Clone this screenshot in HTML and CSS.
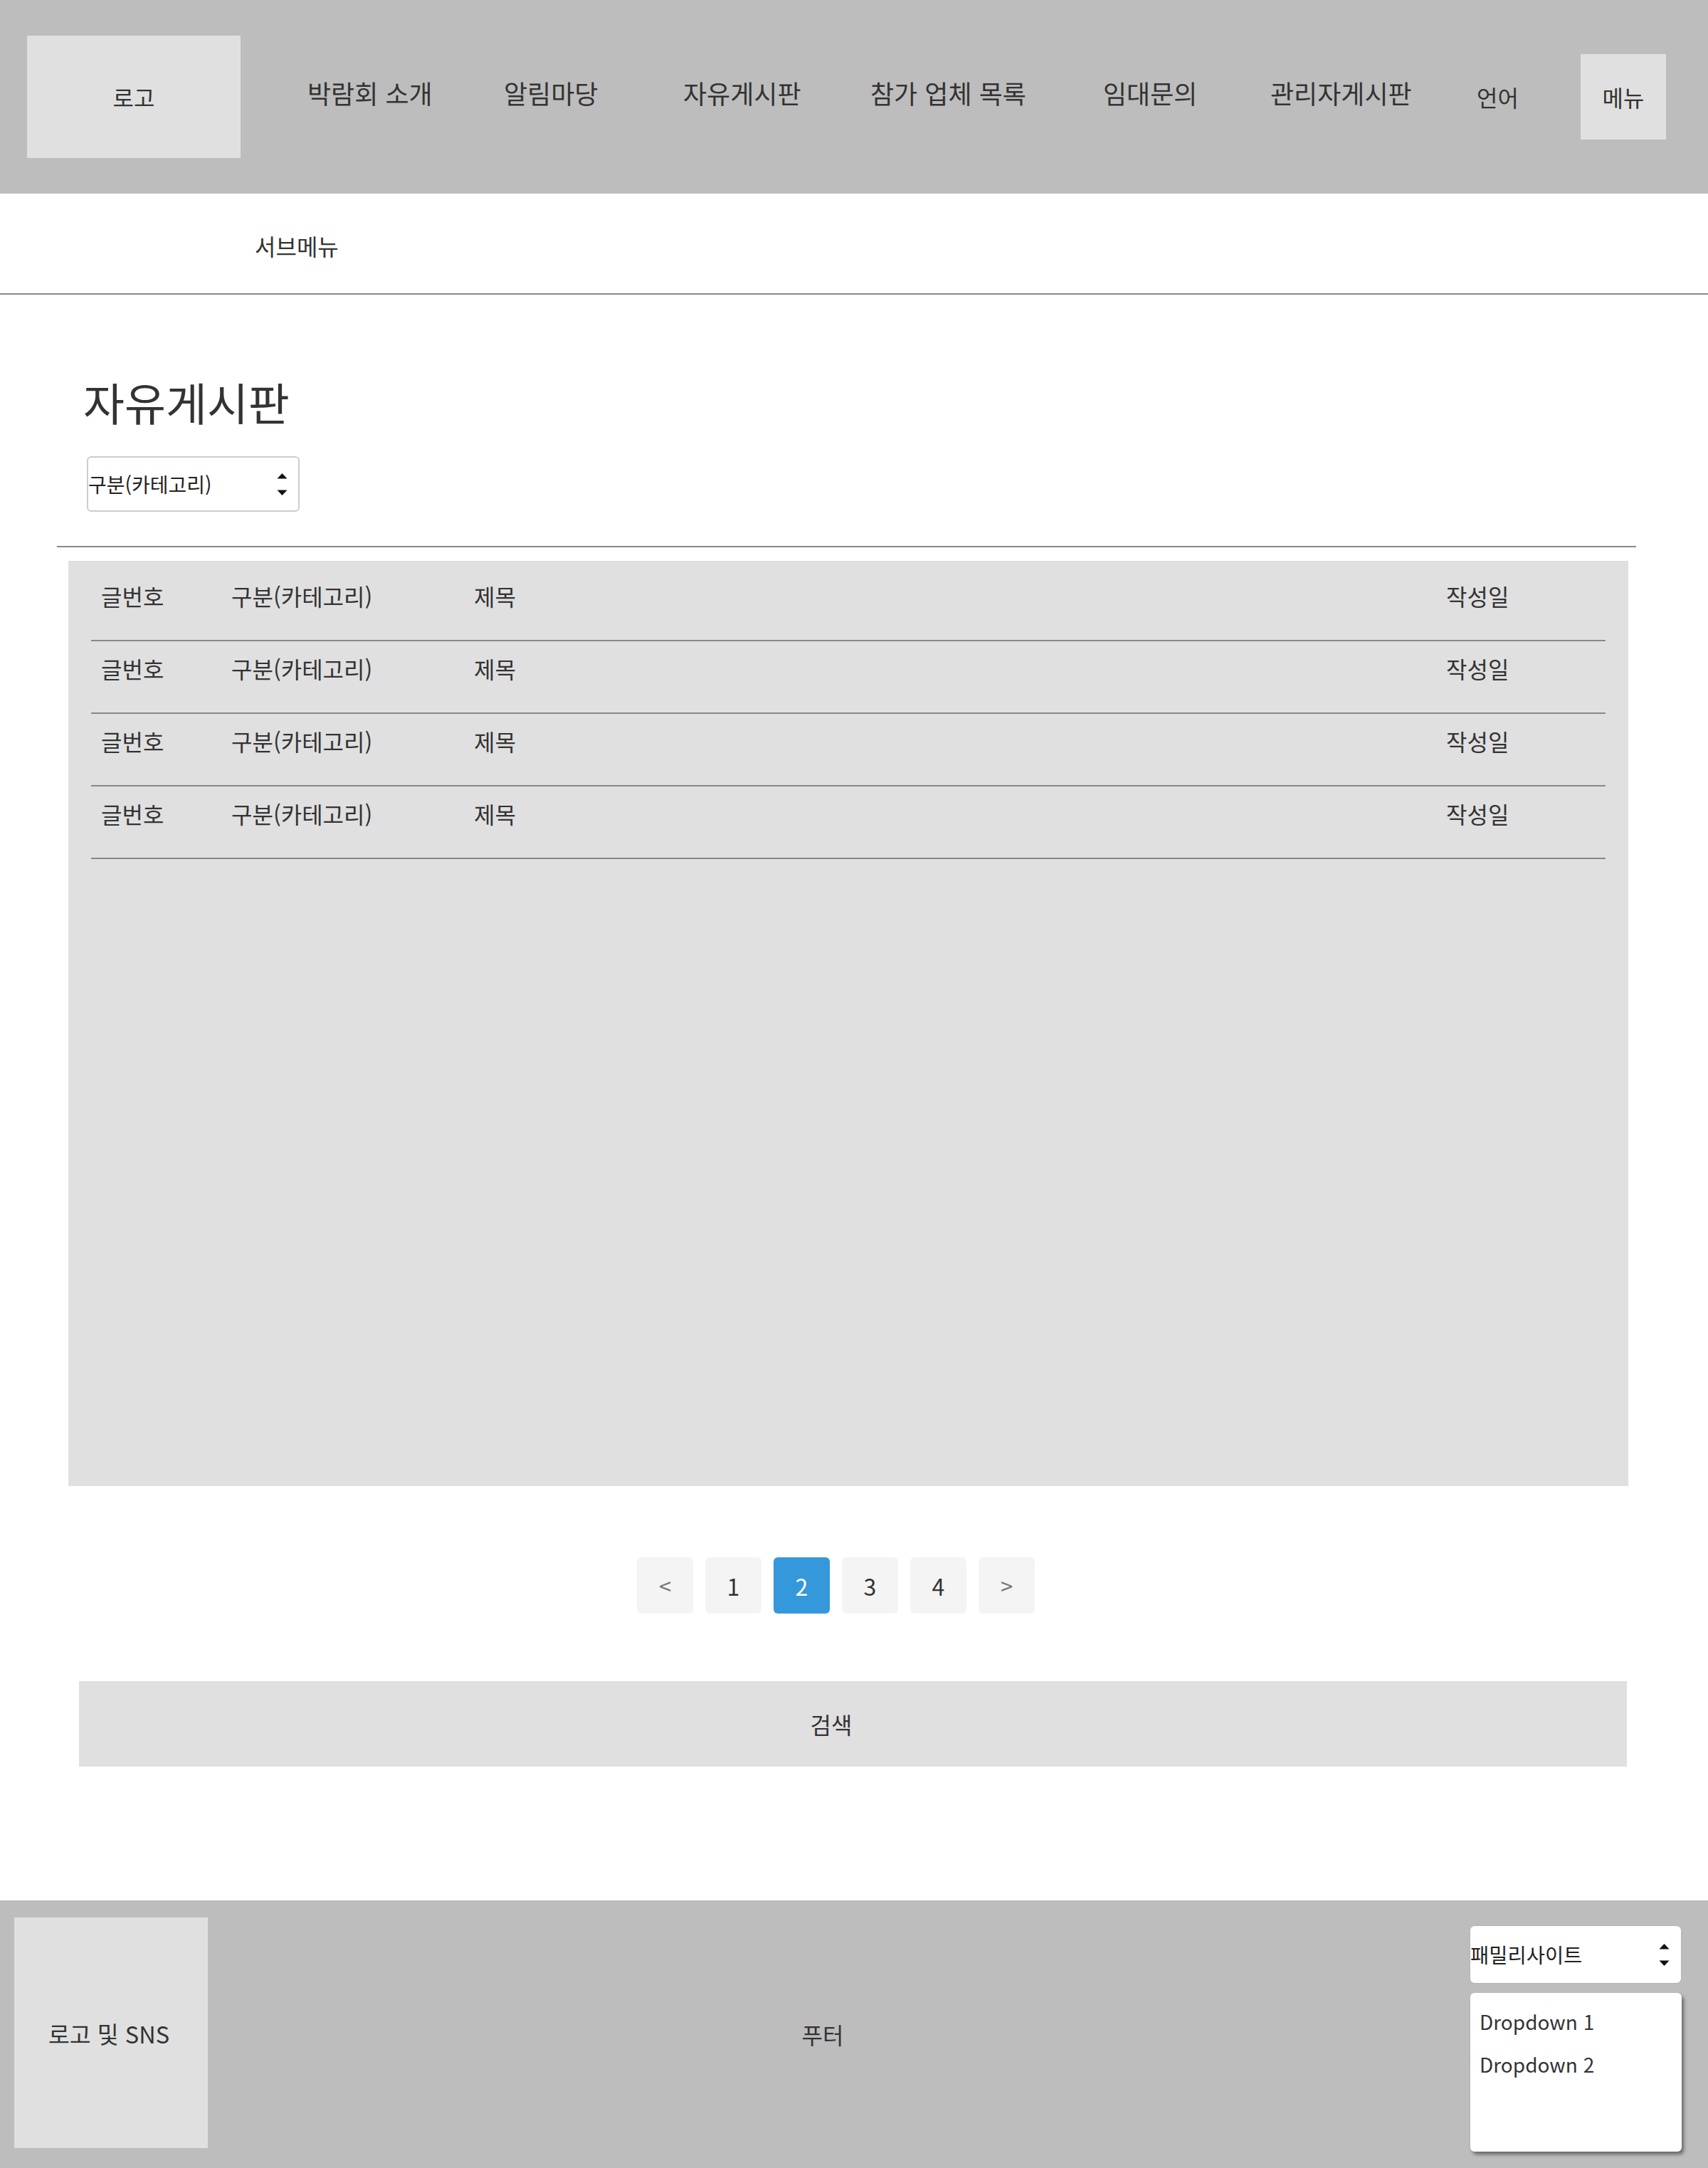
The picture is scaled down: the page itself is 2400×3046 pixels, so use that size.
FILE: index.html
```html
<!DOCTYPE html>
<html lang="ko">
<head>
<meta charset="utf-8">
<title>자유게시판</title>
<link rel="stylesheet" href="styles.css">
</head>
<body>
<header class="site-header">
  <div class="logo">로고</div>
  <nav class="gnb">
    <span class="gnb-item">박람회 소개</span>
    <span class="gnb-item">알림마당</span>
    <span class="gnb-item">자유게시판</span>
    <span class="gnb-item">참가 업체 목록</span>
    <span class="gnb-item">임대문의</span>
    <span class="gnb-item">관리자게시판</span>
  </nav>
  <div class="lang">언어</div>
  <div class="menu-btn">메뉴</div>
</header>
<div class="submenu"><span>서브메뉴</span></div>

<main class="board">
  <h1 class="board-title">자유게시판</h1>
  <div class="category-select">
    <span>구분(카테고리)</span>
    <svg class="updown" width="15" height="31" viewBox="0 0 15 31"><polygon points="0.5,7.5 7.5,0 14.5,7.5" fill="#111"/><polygon points="0.5,23.5 14.5,23.5 7.5,31" fill="#111"/></svg>
  </div>
  <div class="divider"></div>
  <div class="board-list">
    <div class="row"><span>글번호</span><span>구분(카테고리)</span><span>제목</span><span>작성일</span></div>
    <div class="row"><span>글번호</span><span>구분(카테고리)</span><span>제목</span><span>작성일</span></div>
    <div class="row"><span>글번호</span><span>구분(카테고리)</span><span>제목</span><span>작성일</span></div>
    <div class="row"><span>글번호</span><span>구분(카테고리)</span><span>제목</span><span>작성일</span></div>
  </div>
  <div class="pagination">
    <span class="page arrow">&lt;</span>
    <span class="page">1</span>
    <span class="page active">2</span>
    <span class="page">3</span>
    <span class="page">4</span>
    <span class="page arrow">&gt;</span>
  </div>
  <div class="search"><span>검색</span></div>
</main>

<footer class="site-footer">
  <div class="footer-logo">로고 및 SNS</div>
  <div class="footer-info">푸터</div>
  <div class="footer-right">
    <div class="family-select">
      <span>패밀리사이트</span>
      <svg class="updown" width="15" height="31" viewBox="0 0 15 31"><polygon points="0.5,7.5 7.5,0 14.5,7.5" fill="#111"/><polygon points="0.5,23.5 14.5,23.5 7.5,31" fill="#111"/></svg>
    </div>
    <div class="family-dropdown">
      <div class="dd-item">Dropdown 1</div>
      <div class="dd-item">Dropdown 2</div>
    </div>
  </div>
</footer>
</body>
</html>
```
FILE: styles.css
```css
* { box-sizing: border-box; }
html, body { margin: 0; padding: 0; background: #fff; }
body {
  width: 2400px;
  font-family: "Noto Sans CJK KR", "Noto Sans", sans-serif;
  color: #333;
  line-height: 1.2;
}

/* header */
.site-header {
  display: flex;
  align-items: center;
  height: 272px;
  background: #bdbdbd;
}
.logo {
  margin-left: 38px;
  width: 300px;
  height: 172px;
  background: #e0e0e0;
  display: flex;
  align-items: center;
  justify-content: center;
  font-size: 32px;
}
.gnb {
  display: grid;
  grid-template-columns: 276px 252px 263px 327px 235px 290px;
  margin-left: 94px;
  margin-bottom: 10px;
  font-size: 36px;
}
.gnb-item { white-space: nowrap; }
.lang {
  width: 146px;
  font-size: 32px;
}
.menu-btn {
  width: 120px;
  height: 120px;
  background: #e0e0e0;
  display: flex;
  align-items: center;
  justify-content: center;
  font-size: 32px;
}

.submenu {
  height: 142px;
  border-bottom: 2px solid #888;
  padding: 6px 0 0 358px;
  display: flex;
  align-items: center;
  font-size: 32px;
}

/* board */
.board { padding-top: 113px; }
.board-title {
  margin: 0;
  padding-left: 117px;
  font-size: 63px;
  font-weight: 400;
  line-height: 1.18;
}
.category-select {
  margin: 40px 0 0 122px;
  width: 299px;
  height: 78px;
  border: 2px solid #ccc;
  border-radius: 6px;
  background: #fff;
  display: flex;
  align-items: center;
  justify-content: space-between;
  padding: 0 15px 0 0;
  font-size: 28px;
  color: #222;
}
.updown { display: block; }
.divider {
  margin: 48px 0 0 80px;
  width: 2219px;
  height: 2px;
  background: #888;
}
.board-list {
  margin: 19px 0 0 96px;
  width: 2192px;
  height: 1300px;
  background: #e0e0e0;
  padding: 11px 32px 0;
}
.row {
  display: grid;
  grid-template-columns: 183px 341px 1366px 1fr;
  height: 102px;
  border-bottom: 2px solid #888;
  padding: 19px 0 0 14px;
  font-size: 32px;
}

.pagination {
  display: flex;
  justify-content: center;
  gap: 17px;
  margin-top: 100px;
  padding-right: 51px;
}
.page {
  width: 79px;
  height: 79px;
  border-radius: 6px;
  background: #f4f4f4;
  display: flex;
  align-items: center;
  justify-content: center;
  font-size: 32px;
  color: #333;
}
.page.active { background: #3498db; color: #fff; }
.page.arrow { color: #777; font-size: 31px; }

.search {
  margin: 95px 114px 0 111px;
  height: 120px;
  background: #e0e0e0;
  display: flex;
  align-items: center;
  justify-content: center;
  padding-right: 61px;
  font-size: 32px;
}

/* footer */
.site-footer {
  display: flex;
  height: 376px;
  margin-top: 188px;
  background: #bdbdbd;
}
.footer-logo {
  margin: 24px 0 28px 20px;
  width: 272px;
  background: #e0e0e0;
  display: flex;
  align-items: center;
  justify-content: center;
  padding-right: 6px;
  font-size: 32.5px;
}
.footer-info {
  flex: 1;
  display: flex;
  align-items: center;
  justify-content: center;
  padding-right: 46px;
  font-size: 32px;
}
.footer-right {
  width: 297px;
  margin: 36px 37px 0 0;
}
.family-select {
  width: 296px;
  height: 80px;
  background: #fff;
  border-radius: 6px;
  box-shadow: 0 0 2px rgba(0,0,0,0.15);
  display: flex;
  align-items: center;
  justify-content: space-between;
  padding-right: 16px;
  font-size: 28.5px;
  color: #222;
}
.family-dropdown {
  margin-top: 14px;
  height: 223px;
  background: #fff;
  border-radius: 6px;
  box-shadow: 3px 4px 5px rgba(0,0,0,0.45);
  padding: 10px 13px;
  font-size: 28px;
  line-height: 60px;
}
```
